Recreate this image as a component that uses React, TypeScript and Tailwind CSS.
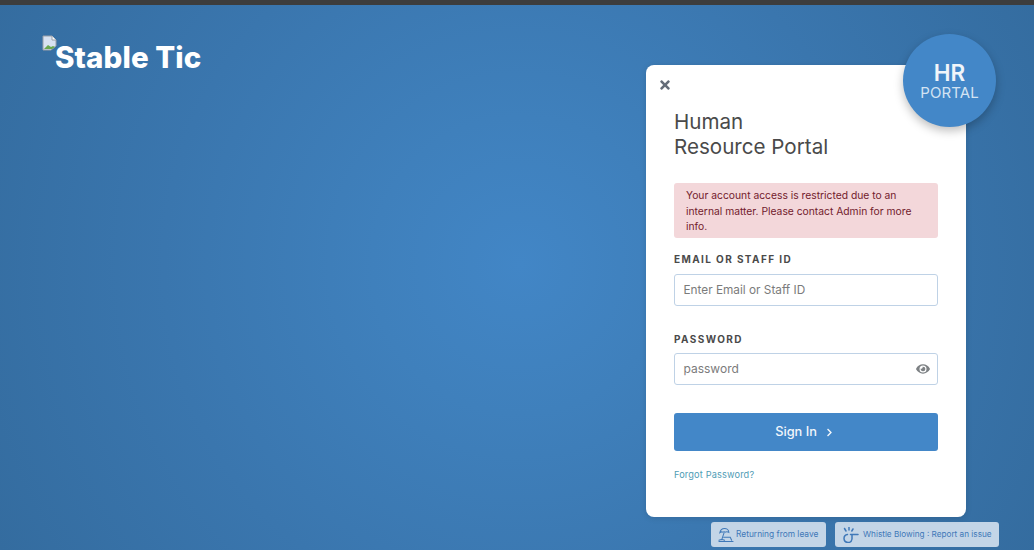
import { FaChevronRight, FaEye, FaTimes } from "react-icons/fa";

const BrokenImage = () => (
  <svg width="16" height="16" viewBox="0 0 16 16" className="shrink-0">
    <path d="M1 1h9l4 4v6l-5 4H1z" fill="#d8e2f1" stroke="#9aa0a8" strokeWidth="1" />
    <path d="M10 1v4h4" fill="#fff" stroke="#9aa0a8" strokeWidth="1" />
    <path d="M2 14l4-4 3 2 2-1 2 1-3 2H2z" fill="#6aa84f" />
  </svg>
);

const BeachIcon = () => (
  <svg width="16" height="16" viewBox="0 0 17 16" fill="none" stroke="#3f78b8" strokeWidth="1.1" strokeLinecap="round" className="shrink-0">
    <path d="M2 5.500C2.500 2 5 1 7 1s4.500 1.500 4.500 4.200C10 4.300 9 4.300 8 5 7 4.300 6 4.300 5 5 4 4.400 3 4.600 2 5.500z" />
    <path d="M6.500 5.500 4 13" />
    <path d="M1 13.500c2-1 4-1 6 0" />
    <path d="M6 10.500h7l1.500 3" />
    <path d="M1 15h15" />
  </svg>
);

const WhistleIcon = () => (
  <svg width="16" height="16" viewBox="0 0 16 16" fill="none" stroke="#3f78b8" strokeWidth="1.500" strokeLinecap="round" className="shrink-0">
    <path d="M7.500 7.500H15" />
    <path d="M4.500 7.500a4 4 0 1 0 4.500 4.500V8" />
    <path d="M1.500 1.500 3 4" />
    <path d="M6 0.500V3" />
    <path d="M10 2 8.800 4" />
  </svg>
);

const App = () => {
  return (
    <div className="w-[1034px] h-[550px] overflow-hidden flex flex-col bg-[radial-gradient(circle_at_520px_265px,#4286c6_0%,#3f80bc_25%,#3a76ae_60%,#346c9f_100%)] font-['Inter',sans-serif]">
      <div className="h-[5px] shrink-0 bg-[#3d3d3d]"></div>
      <div className="flex justify-between items-start">
        <div className="flex items-start ml-[42px] mt-[30px]">
          <BrokenImage />
          <span className="-ml-[3px] mt-[5px] text-[29.500px] leading-[34px] font-extrabold text-white tracking-[0.1px]">Stable Tic</span>
        </div>
        <div className="mr-[34px] mt-[30px] flex flex-col items-end">
          <div className="relative w-[320px] h-[452px] mt-[30px] mr-[34px] rounded-[8px] bg-white shadow-[0_1px_6px_rgba(0,0,0,0.12)] px-[28px] pt-[44px]">
            <FaTimes className="absolute left-[12px] top-[13px] text-[#646c78] text-[14px]" />
            <div className="absolute -right-[30px] -top-[31px] w-[93px] h-[93px] rounded-full bg-[#4387c8] shadow-[0_4px_10px_rgba(0,0,0,0.25)] flex flex-col items-center justify-center gap-[2px] pt-[3px] text-white">
              <span className="text-[22.500px] leading-[20px] font-semibold text-[#f0f5fa]">HR</span>
              <span className="text-[15px] leading-[16px] text-[#d3e3f3] tracking-[0.1px]">PORTAL</span>
            </div>
            <h1 className="text-[20.600px] leading-[25px] text-[#4a4a4a] font-normal">
              Human
              <br />
              Resource Portal
            </h1>
            <div className="mt-[24px] h-[55px] rounded-[3px] bg-[#f3d7da] px-[12px] pt-[5px] text-[10.300px] leading-[15.500px] text-[#72202c]">
              Your account access is restricted due to an internal matter. Please contact Admin for more info.
            </div>
            <label className="block mt-[14px] text-[10px] leading-[14px] font-bold tracking-[1.400px] text-[#4a4a4a]">EMAIL OR STAFF ID</label>
            <div className="mt-[8px] h-[32px] rounded-[3px] border border-[#bfd2e6] px-[8.500px] pt-[1px] flex items-center text-[11.800px] text-[#7b7b7b]">Enter Email or Staff ID</div>
            <label className="block mt-[26px] text-[10px] leading-[14px] font-bold tracking-[1.400px] text-[#4a4a4a]">PASSWORD</label>
            <div className="mt-[7px] h-[32px] rounded-[3px] border border-[#bfd2e6] pl-[8.500px] pr-[7px] flex items-center justify-between text-[12px] text-[#7b7b7b]">
              <span>password</span>
              <FaEye className="text-[#7d8184] text-[14px]" />
            </div>
            <button className="mt-[28px] w-full h-[38px] rounded-[3px] bg-[#4387c8] flex items-center justify-center gap-[8px] pr-[3px] text-[12.800px] font-[450] text-[#f2f6fb]">
              Sign In
              <FaChevronRight className="text-[9px]" />
            </button>
            <a className="block mt-[18px] text-[9.200px] leading-[12px] text-[#4f9cb5] tracking-[0.15px]">Forgot Password?</a>
          </div>
          <div className="mt-[5px] mr-[1px] flex gap-[9px]">
            <div className="w-[115px] h-[25px] rounded-[3px] bg-[#c3d5e7] flex items-center pl-[7px] gap-[2px] text-[8.400px] text-[#3f78b8]">
              <BeachIcon />
              Returning from leave
            </div>
            <div className="w-[164px] h-[25px] rounded-[3px] bg-[#c3d5e7] flex items-center pl-[8px] gap-[4px] text-[8.200px] text-[#3f78b8]">
              <WhistleIcon />
              Whistle Blowing : Report an issue
            </div>
          </div>
        </div>
      </div>
    </div>
  );
};

export default App;
